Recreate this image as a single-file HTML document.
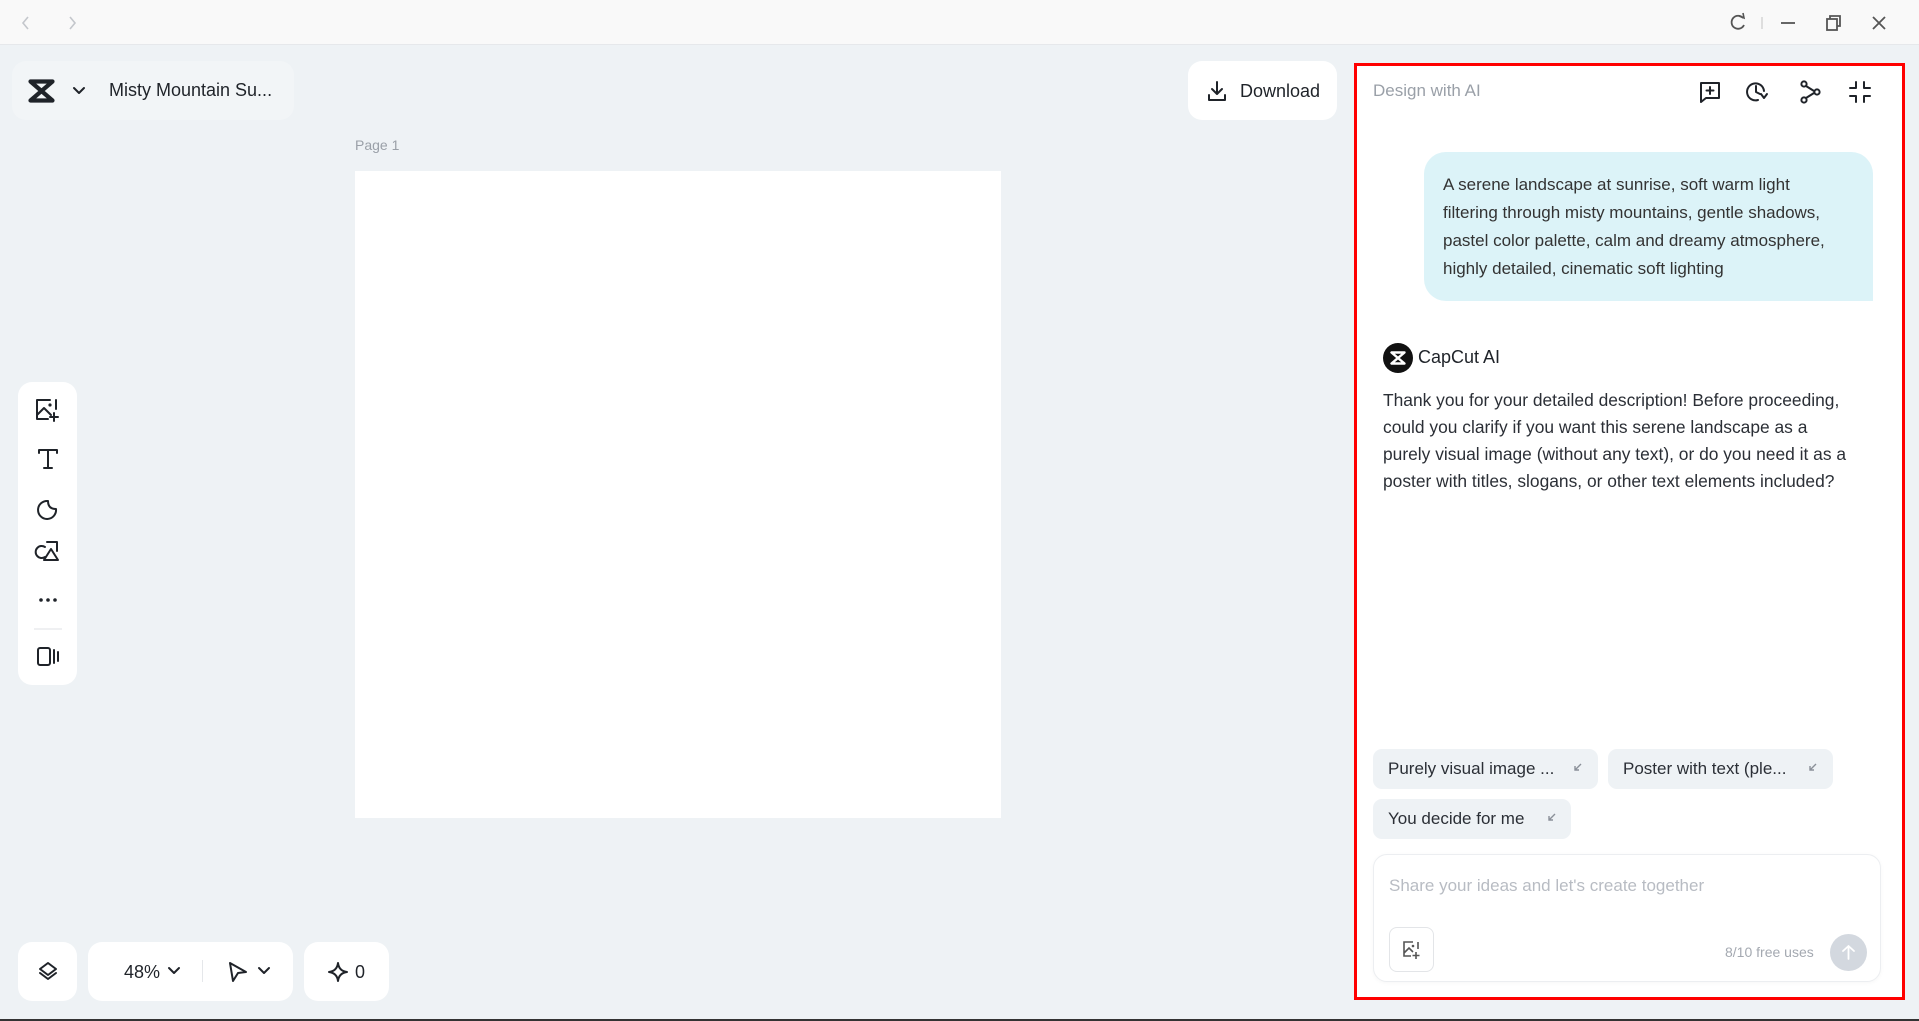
<!DOCTYPE html>
<html><head><meta charset="utf-8"><style>
*{box-sizing:border-box;margin:0;padding:0}
body{width:1919px;height:1021px;overflow:hidden;background:#eef2f5;font-family:"Liberation Sans",sans-serif;color:#1f2329;position:relative}
.abs{position:absolute}
.white{background:#fff}
svg{display:block}
.ico{fill:none;stroke:#1f2329;stroke-width:2;stroke-linecap:round;stroke-linejoin:round}
.ln{white-space:nowrap}
</style></head><body>
<div class="abs" style="left:0;top:0;width:1919px;height:45px;background:#f9f9f9;border-bottom:1px solid #e6e8eb"></div>
<svg class="abs" style="left:18px;top:14px" width="60" height="18"><path d="M10 3 L5 9 L10 15 M52 3 L57 9 L52 15" fill="none" stroke="#c4c7cc" stroke-width="1.6"/></svg>
<svg class="abs" style="left:1726px;top:12px" width="170" height="22" viewBox="0 0 170 22">
<path d="M17 6 A6.5 6.5 0 1 0 18 13" fill="none" stroke="#555" stroke-width="1.8"/><path d="M13 4 L18 6 L17 1" fill="none" stroke="#555" stroke-width="1.6"/>
<line x1="36" y1="5" x2="36" y2="17" stroke="#ccc" stroke-width="1.2"/>
<line x1="55" y1="11" x2="69" y2="11" stroke="#555" stroke-width="1.8"/>
<rect x="101" y="7" width="10" height="11" fill="none" stroke="#555" stroke-width="1.8"/><path d="M104 7 V4 H114 V14 H111" fill="none" stroke="#555" stroke-width="1.8"/>
<path d="M147 5 L159 17 M159 5 L147 17" stroke="#555" stroke-width="1.8"/>
</svg>

<div class="abs" style="left:12px;top:61px;width:282px;height:59px;border-radius:14px;background:#f2f5f7"></div>
<svg class="abs" style="left:28px;top:79px" width="27" height="24" viewBox="0 0 27 24"><path d="M2.5 2.5 H24.5 L2.5 21.5 H24.5 Z" fill="none" stroke="#1f2329" stroke-width="4.2" stroke-linejoin="round"/></svg>
<svg class="abs" style="left:72px;top:86px" width="14" height="10"><path d="M2 2 L7 7 L12 2" class="ico"/></svg>
<div class="abs ln" style="left:109px;top:80px;font-size:18px">Misty Mountain Su...</div>

<div class="abs" style="left:355px;top:137px;font-size:14px;color:#9aa0a8">Page 1</div>
<div class="abs white" style="left:355px;top:171px;width:646px;height:647px"></div>

<div class="abs white" style="left:1188px;top:61px;width:149px;height:59px;border-radius:14px"></div>
<svg class="abs" style="left:1206px;top:80px" width="22" height="22" viewBox="0 0 22 22"><path d="M11 2 V14 M6 9 L11 14 L16 9 M3 15 V20 H19 V15" class="ico"/></svg>
<div class="abs ln" style="left:1240px;top:81px;font-size:18px">Download</div>

<div class="abs white" style="left:18px;top:382px;width:59px;height:303px;border-radius:14px"></div>
<svg class="abs" style="left:34px;top:397px" width="28" height="280" viewBox="0 0 28 280">
<path d="M16 3 H3 V22 H14 M22 3 V12 M3 18 L10 11 L17 18" class="ico"/><circle cx="16" cy="8" r="1.6" fill="#1f2329"/><path d="M20 16 V24 M16 20 H24" class="ico"/>
<path d="M5 56 V53 H23 V56 M14 53 V71 M10 71 H18" class="ico"/>
<path d="M22 112 A9 9 0 1 1 14 104 Q14 112 22 112 Z" class="ico"/>
<path d="M11 150 A6 6 0 1 0 11 160 M13 145 H23 V154 M17 152 L10 163 H24 Z" class="ico"/>
<circle cx="7" cy="203" r="1.8" fill="#1f2329"/><circle cx="14" cy="203" r="1.8" fill="#1f2329"/><circle cx="21" cy="203" r="1.8" fill="#1f2329"/>
<line x1="-6" y1="232" x2="34" y2="232" stroke="#e5e7ea" stroke-width="1.2"/>
<rect x="4" y="251" width="12" height="17" rx="2" class="ico"/><path d="M20 253 V266 M24 255 V264" class="ico"/>
</svg>

<div class="abs white" style="left:18px;top:942px;width:59px;height:59px;border-radius:14px"></div>
<svg class="abs" style="left:36px;top:960px" width="24" height="24" viewBox="0 0 24 24"><path d="M12 3 L20 9 L12 15 L4 9 Z M4 13 L12 19 L20 13" class="ico"/></svg>
<div class="abs white" style="left:88px;top:942px;width:205px;height:59px;border-radius:14px"></div>
<div class="abs ln" style="left:124px;top:962px;font-size:18px">48%</div>
<svg class="abs" style="left:167px;top:966px" width="14" height="10"><path d="M2 2 L7 7 L12 2" class="ico"/></svg>
<div class="abs" style="left:202px;top:960px;width:1px;height:22px;background:#e5e7ea"></div>
<svg class="abs" style="left:226px;top:960px" width="24" height="24" viewBox="0 0 24 24"><path d="M4 3 L20 12 L12 13 L7 21 Z" class="ico"/></svg>
<svg class="abs" style="left:257px;top:966px" width="14" height="10"><path d="M2 2 L7 7 L12 2" class="ico"/></svg>
<div class="abs white" style="left:304px;top:942px;width:85px;height:59px;border-radius:14px"></div>
<svg class="abs" style="left:327px;top:961px" width="22" height="22" viewBox="0 0 22 22"><path d="M11 2 Q12 10 20 11 Q12 12 11 20 Q10 12 2 11 Q10 10 11 2 Z" class="ico"/></svg>
<div class="abs ln" style="left:355px;top:962px;font-size:18px">0</div>

<div class="abs white" style="left:1354px;top:63px;width:551px;height:937px;border:3px solid #f00"></div>
<div class="abs ln" style="left:1373px;top:81px;font-size:17px;color:#9aa0a8">Design with AI</div>
<svg class="abs" style="left:1697px;top:79px" width="180" height="26" viewBox="0 0 180 26">
<path d="M4 4 H22 V19 H9 L4 23 Z M13 8 V15 M9.5 11.5 H16.5" class="ico"/>
<path d="M67 12 A8.5 8.5 0 1 0 61 21 M59 7 V13 L63 15 M64 15 L67 19 L70 15" class="ico"/>
<circle cx="107" cy="5" r="2.6" class="ico"/><circle cx="107" cy="21" r="2.6" class="ico"/><circle cx="120" cy="13" r="2.6" class="ico"/><path d="M109 7 L117 12 M109 19 L117 14" class="ico"/>
<path d="M159 3 V9 H153 M167 3 V9 H173 M159 23 V17 H153 M167 23 V17 H173" class="ico"/>
</svg>

<div class="abs" style="left:1424px;top:152px;width:449px;height:149px;background:#dcf3f8;border-radius:22px 22px 0 22px"></div>
<div class="abs" style="left:1443px;top:171px;font-size:17px;line-height:28px;color:#333">
<div class="ln">A serene landscape at sunrise, soft warm light</div>
<div class="ln">filtering through misty mountains, gentle shadows,</div>
<div class="ln">pastel color palette, calm and dreamy atmosphere,</div>
<div class="ln">highly detailed, cinematic soft lighting</div></div>

<div class="abs" style="left:1383px;top:343px;width:30px;height:30px;border-radius:50%;background:#111"></div>
<svg class="abs" style="left:1390px;top:351px" width="16" height="14" viewBox="0 0 16 14"><path d="M1.5 1.5 H14.5 L1.5 12.5 H14.5 Z" fill="none" stroke="#fff" stroke-width="2.4" stroke-linejoin="round"/></svg>
<div class="abs ln" style="left:1418px;top:347px;font-size:18px">CapCut AI</div>
<div class="abs" style="left:1383px;top:387px;font-size:17.4px;line-height:27px;color:#2b2f36">
<div class="ln">Thank you for your detailed description! Before proceeding,</div>
<div class="ln">could you clarify if you want this serene landscape as a</div>
<div class="ln">purely visual image (without any text), or do you need it as a</div>
<div class="ln">poster with titles, slogans, or other text elements included?</div></div>

<div class="abs" style="left:1373px;top:749px;width:225px;height:40px;border-radius:9px;background:#eef2f5"></div>
<div class="abs ln" style="left:1388px;top:759px;font-size:17px;color:#2b2f36">Purely visual image ...</div>
<div class="abs" style="left:1608px;top:749px;width:225px;height:40px;border-radius:9px;background:#eef2f5"></div>
<div class="abs ln" style="left:1623px;top:759px;font-size:17px;color:#2b2f36">Poster with text (ple...</div>
<div class="abs" style="left:1373px;top:799px;width:198px;height:40px;border-radius:9px;background:#eef2f5"></div>
<div class="abs ln" style="left:1388px;top:809px;font-size:17px;color:#2b2f36">You decide for me</div>
<svg class="abs" style="left:1572px;top:762px" width="12" height="12"><path d="M9 2 L3 8 M3 4 V8 H7" fill="none" stroke="#8a9099" stroke-width="1.4"/></svg>
<svg class="abs" style="left:1807px;top:762px" width="12" height="12"><path d="M9 2 L3 8 M3 4 V8 H7" fill="none" stroke="#8a9099" stroke-width="1.4"/></svg>
<svg class="abs" style="left:1546px;top:812px" width="12" height="12"><path d="M9 2 L3 8 M3 4 V8 H7" fill="none" stroke="#8a9099" stroke-width="1.4"/></svg>

<div class="abs white" style="left:1373px;top:854px;width:508px;height:128px;border-radius:14px;border:1px solid #eceef1;box-shadow:0 1px 4px rgba(0,0,0,.04)"></div>
<div class="abs ln" style="left:1389px;top:876px;font-size:17px;color:#b8bcc3">Share your ideas and let's create together</div>
<div class="abs" style="left:1389px;top:927px;width:45px;height:45px;border-radius:8px;border:1px solid #e3e5e8"></div>
<svg class="abs" style="left:1401px;top:939px" width="22" height="22" viewBox="0 0 22 22"><path d="M12 3 H3 V17 H10 M17 3 V10 M3 14 L8 9 L12 13" fill="none" stroke="#555" stroke-width="1.6"/><circle cx="12" cy="7" r="1.3" fill="#555"/><path d="M15 13 V20 M11.5 16.5 H18.5" fill="none" stroke="#555" stroke-width="1.6"/></svg>
<div class="abs ln" style="left:1725px;top:944px;font-size:14px;color:#a4a9b1">8/10 free uses</div>
<div class="abs" style="left:1830px;top:934px;width:37px;height:37px;border-radius:50%;background:#d3d8df"></div>
<svg class="abs" style="left:1838px;top:942px" width="21" height="21" viewBox="0 0 21 21"><path d="M10.5 17 V4 M5 9 L10.5 4 L16 9" fill="none" stroke="#fff" stroke-width="1.8" stroke-linecap="round" stroke-linejoin="round"/></svg>
<div class="abs" style="left:0;top:1019px;width:1919px;height:2px;background:#333"></div>
</body></html>
